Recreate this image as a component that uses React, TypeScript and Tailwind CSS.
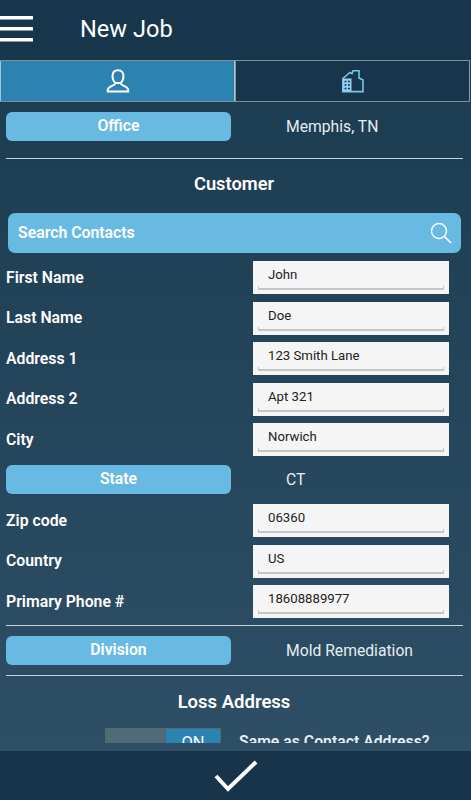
import React from "react";

const fields1 = [
  { label: "First Name", value: "John" },
  { label: "Last Name", value: "Doe" },
  { label: "Address 1", value: "123 Smith Lane" },
  { label: "Address 2", value: "Apt 321" },
  { label: "City", value: "Norwich" },
];

const fields2 = [
  { label: "Zip code", value: "06360" },
  { label: "Country", value: "US" },
  { label: "Primary Phone #", value: "18608889977" },
];

const FieldRow = ({ label, value }: { label: string; value: string }) => (
  <div className="flex h-[33px] items-center justify-between pl-[6px] pr-[22px]">
    <span className="text-[15.8px] font-semibold text-white">{label}</span>
    <div className="relative h-[33px] w-[196px] bg-[#f5f5f5] pl-[15px] pt-[5px] text-[13.2px] leading-[18px] text-[#222]">
      {value}
      <div className="absolute bottom-[4px] left-[5px] right-[5px] h-[4px] border-x border-b-2 border-[#c6c6c6]" />
    </div>
  </div>
);

const PickerRow = ({ label, value }: { label: string; value: string }) => (
  <div className="flex h-[30px] items-center px-[6px]">
    <div className="flex h-[29px] w-[225px] items-center justify-center rounded-[6px] bg-[#68bae3] pb-[1px] text-[15.8px] font-semibold text-white">
      {label}
    </div>
    <span className="ml-[55px] pt-[2px] text-[15.7px] text-[#e6edf1]">{value}</span>
  </div>
);

const App = () => {
  return (
    <div className="flex h-[800px] w-[471px] flex-col overflow-hidden bg-linear-to-b from-[#1a3a50] to-[#2f5066] font-['Roboto',sans-serif]">
      <header className="flex h-[60px] shrink-0 items-center bg-[#18364b]">
        <svg width="33" height="26" viewBox="0 0 33 26" className="mb-[3px] shrink-0">
          <rect x="0" y="0" width="33" height="3.5" fill="#fff" />
          <rect x="0" y="11" width="33" height="3.5" fill="#fff" />
          <rect x="0" y="22" width="33" height="3.5" fill="#fff" />
        </svg>
        <h1 className="ml-[47px] text-[23.6px] font-normal leading-none text-white">New Job</h1>
      </header>

      <div className="flex h-[42px] w-[470px] shrink-0 border-y border-[#7f8e99]">
        <div className="flex w-[235px] items-center justify-center border-x border-[#a9c3d3] bg-[#2c83b1]">
          <svg width="24" height="24" viewBox="0 0 24 24" fill="none" stroke="#fff" strokeWidth="2">
            <path d="M12 1.2C8.4 1.2 6.5 3.8 6.5 7.2C6.5 10 7.8 12.6 9.4 14H14.6C16.2 12.6 17.5 10 17.5 7.2C17.5 3.8 15.6 1.2 12 1.2Z" />
            <path d="M9.4 14.5C8.5 17 2.5 17 1.8 20.5V22.4H22.2V20.5C21.5 17 15.5 17 14.6 14.5" />
          </svg>
        </div>
        <div className="flex flex-1 items-center justify-center border-x border-[#8c9aa4] bg-[#18364b]">
          <svg width="22" height="24" viewBox="0 0 22 24" fill="none" stroke="#7cc4ec" strokeWidth="1.6">
            <path d="M0.8 22.6V9.5L8 3.5L10 4.6L11 1.8H17V9L21 11V22.6Z" />
            <path d="M1 22.6V9.5H9.5V22.6Z" fill="#8fd0f2" stroke="none" />
            <path d="M2.5 12.5H4.5M6 12.5H8M2.5 16H4.5M6 16H8M2.5 19.5H4.5M6 19.5H8" stroke="#18364b" strokeWidth="1.3" />
          </svg>
        </div>
      </div>

      <main className="h-[641px] shrink-0 overflow-hidden">
        <div className="pt-[9px]">
          <PickerRow label="Office" value="Memphis, TN" />
        </div>
        <hr className="ml-[6px] mr-[8px] mt-[17px] border-t border-[#c7d3db]" />
        <h2 className="mr-[3px] mt-[16px] text-center text-[18.3px] font-semibold leading-[18px] text-white">Customer</h2>

        <div className="ml-[8px] mr-[10px] mt-[20px] flex h-[40px] items-center justify-between rounded-[7px] bg-[#68bae3] pl-[10px] pr-[9px]">
          <span className="text-[15.8px] font-semibold text-white">Search Contacts</span>
          <svg width="22" height="22" viewBox="0 0 22 22" fill="none" stroke="#fff" strokeWidth="1.4">
            <circle cx="9" cy="9" r="7.5" />
            <path d="M14.5 14.5l6.5 6.5" strokeWidth="1.7" />
          </svg>
        </div>

        <div className="mt-[8px] flex flex-col gap-[7.5px]">
          {fields1.map((f) => (
            <FieldRow key={f.label} label={f.label} value={f.value} />
          ))}
        </div>

        <div className="mt-[8px]">
          <PickerRow label="State" value="CT" />
        </div>

        <div className="mt-[10px] flex flex-col gap-[7.5px]">
          {fields2.map((f) => (
            <FieldRow key={f.label} label={f.label} value={f.value} />
          ))}
        </div>

        <hr className="ml-[6px] mr-[8px] mt-[7px] border-t border-[#c7d3db]" />
        <div className="mt-[9px]">
          <PickerRow label="Division" value="Mold Remediation" />
        </div>
        <hr className="ml-[6px] mr-[8px] mt-[10px] border-t border-[#c7d3db]" />
        <h2 className="mr-[3px] mt-[17px] text-center text-[18.5px] font-semibold leading-[18px] text-white">Loss Address</h2>

        <div className="mt-[17px] flex items-start pl-[105px]">
          <div className="flex h-[30px] w-[116px] justify-end border border-[#506a78] bg-[#506a78]">
            <div className="flex h-full w-[54px] items-start justify-center bg-[#2c83b1] pt-[5px] text-[16.5px] leading-[18px] text-white">
              ON
            </div>
          </div>
          <span className="ml-[18px] mt-[5px] text-[15.8px] font-semibold leading-[18px] text-[#e6edf1]">
            Same as Contact Address?
          </span>
        </div>
      </main>

      <div className="h-[8px] shrink-0" />
      <footer className="flex h-[49px] shrink-0 items-center justify-center bg-[#17344a]">
        <svg width="44" height="32" viewBox="0 0 44 32" fill="none" stroke="#fff" strokeWidth="4">
          <path d="M2 16l12 13L42 2" />
        </svg>
      </footer>
    </div>
  );
};

export default App;
